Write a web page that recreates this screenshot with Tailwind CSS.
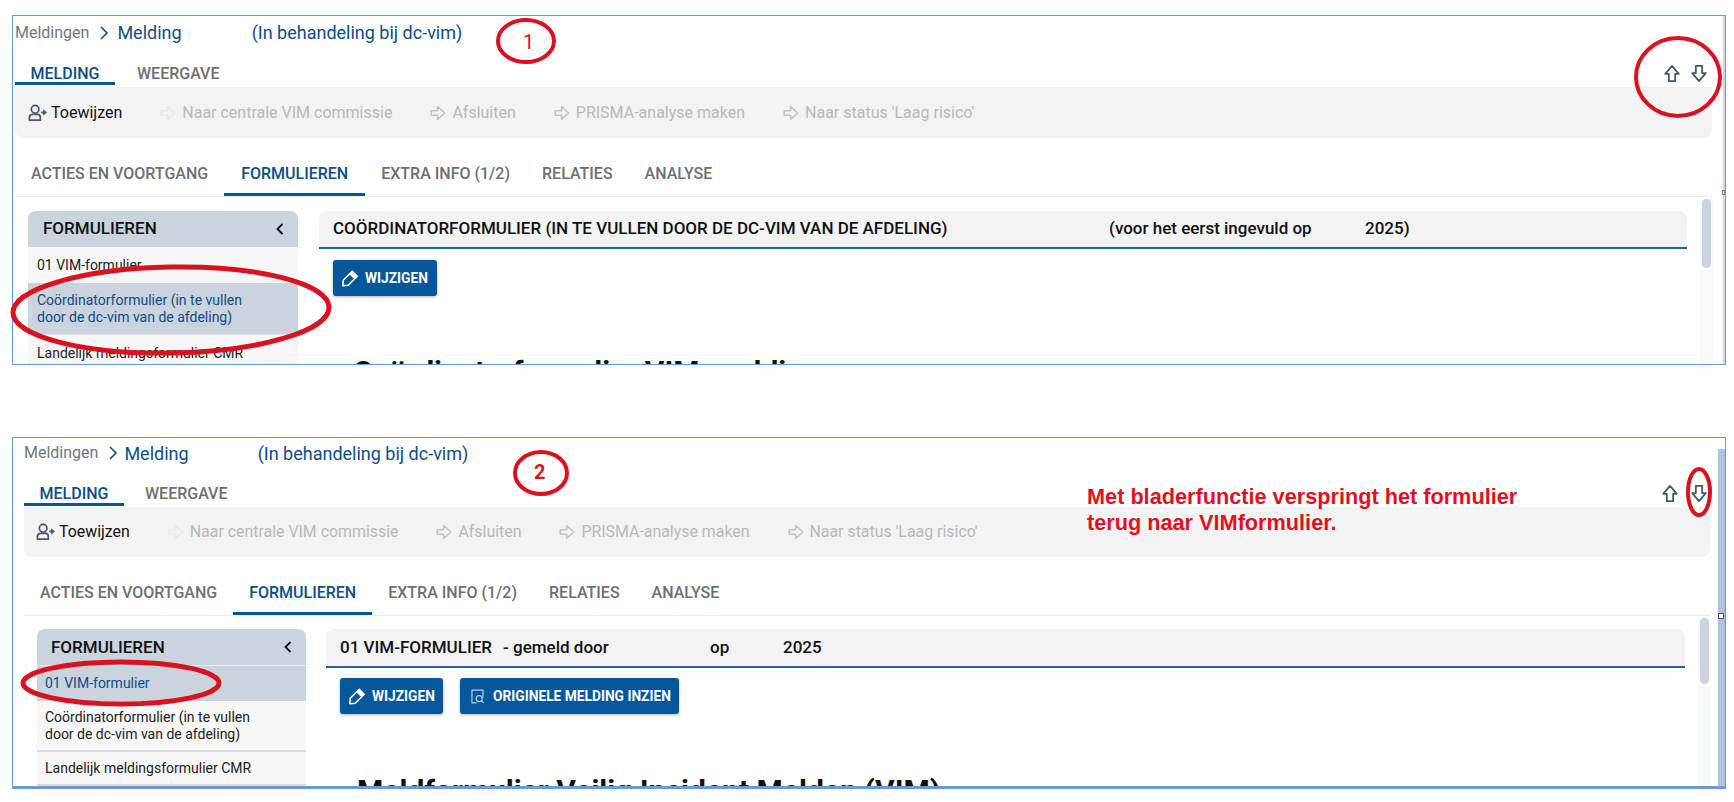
<!DOCTYPE html>
<html lang="nl">
  <head>
    <meta charset="UTF-8" />
    <meta name="viewport" content="width=device-width, initial-scale=1.0" />
    <title>Melding bladerfunctie</title>
    <script src="https://cdn.jsdelivr.net/npm/@tailwindcss/browser@4"></script>
  </head>
  <body class="bg-white font-['Roboto',sans-serif]">
    <svg class="hidden">
      <symbol id="arrow-right" viewBox="0 0 20 20">
        <path d="M2.5 7.5h7V3l8 7-8 7v-4.5h-7z" fill="none" stroke="currentColor" stroke-width="1.8" stroke-linejoin="round" />
      </symbol>
      <symbol id="arrow-up" viewBox="0 0 20 20">
        <path d="M10 1.500l7.500 9h-4v8h-7v-8h-4z" fill="none" stroke="currentColor" stroke-width="2" stroke-linejoin="round" />
      </symbol>
      <symbol id="arrow-down" viewBox="0 0 20 20">
        <path d="M10 18.500l7.500-9h-4v-8h-7v8h-4z" fill="none" stroke="currentColor" stroke-width="2" stroke-linejoin="round" />
      </symbol>
      <symbol id="assign" viewBox="0 0 20 20">
        <circle cx="7.500" cy="6" r="4" fill="none" stroke="currentColor" stroke-width="1.8" />
        <path d="M1.500 17.500v-2.500c0-2 1.500-3.500 3.500-3.500h5c2 0 3 1.500 3 3.500v2.500z" fill="none" stroke="currentColor" stroke-width="1.8" stroke-linejoin="round" />
        <path d="M14 8.500h2V6l4 3.500-4 3.500v-2.500h-2z" fill="currentColor" />
      </symbol>
      <symbol id="pencil" viewBox="0 0 20 20">
        <path d="M12.500 2.500L18 8 8 18l-6 .5.500-6z" fill="none" stroke="currentColor" stroke-width="1.8" stroke-linejoin="round" />
        <path d="M12.500 2.500L18 8l-3 3-5.500-5.500z" fill="currentColor" stroke="currentColor" stroke-linejoin="round" />
      </symbol>
      <symbol id="inspect" viewBox="0 0 20 20">
        <path d="M9 17.500H3.500v-15h13v9" fill="none" stroke="currentColor" stroke-width="1.4" />
        <circle cx="12" cy="12.500" r="3.500" fill="none" stroke="currentColor" stroke-width="1.4" />
        <path d="M14.500 15l3 2.500" fill="none" stroke="currentColor" stroke-width="1.4" />
      </symbol>
    </svg>

    <div class="relative h-[802px] w-full overflow-hidden">
      <!-- Schermafdruk 1 -->
      <section class="relative ml-[12px] mt-[15px] flex h-[350px] w-[1714px] flex-col overflow-hidden border border-[#6d9bc7] bg-white">
        <div class="absolute right-0 top-0 h-full w-[2px] bg-[#c9d8ea]"></div>
        <div class="absolute right-0 top-[174px] h-[5px] w-[3px] border border-[#777] bg-white"></div>
        <div class="flex h-[33px] shrink-0 items-center pl-[2px] text-[18px] text-[#0f4d85]">
          <span class="text-[16px] text-[#72777b]">Meldingen</span>
          <svg class="ml-[9px] h-[14px] w-[12px]" viewBox="0 0 12 14"><path d="M3 1l6 6-6 6" fill="none" stroke="#0f4d85" stroke-width="1.6" /></svg>
          <span class="ml-[7px]">Melding</span>
          <span class="ml-[70px]">(In behandeling bij dc-vim)</span>
        </div>
        <div class="flex h-[38px] shrink-0 pl-[2px] text-[16px] font-medium uppercase">
          <div class="flex h-[36px] w-[100px] items-center justify-center border-b-[3px] border-[#0a5596] pt-[17px] text-[#0f4d85]">Melding</div>
          <div class="flex h-[36px] items-center pb-[3px] pl-[22px] pt-[17px] text-[#6f6f6f]">Weergave</div>
          <div class="ml-auto flex gap-[9px] pr-[17px] pt-[15px] text-[#47586a]">
            <svg class="h-[19px] w-[18px]"><use href="#arrow-up" /></svg>
            <svg class="h-[19px] w-[18px]"><use href="#arrow-down" /></svg>
          </div>
        </div>
        <div class="ml-[2px] flex h-[51px] w-[1697px] shrink-0 items-center gap-[37px] rounded-b-lg bg-[#f3f3f3] pl-[13px] text-[16px] text-[#b9b9b9]">
          <div class="flex items-center gap-[4px] text-[#111]"><svg class="h-[20px] w-[19px] text-[#47586a]"><use href="#assign" /></svg>Toewijzen</div>
          <div class="flex items-center gap-[5px]"><svg class="h-[18px] w-[18px] text-[#e9e9e9]"><use href="#arrow-right" /></svg>Naar centrale VIM commissie</div>
          <div class="flex items-center gap-[5px]"><svg class="h-[18px] w-[18px] text-[#c4c4c4]"><use href="#arrow-right" /></svg>Afsluiten</div>
          <div class="flex items-center gap-[5px]"><svg class="h-[18px] w-[18px] text-[#c4c4c4]"><use href="#arrow-right" /></svg>PRISMA-analyse maken</div>
          <div class="flex items-center gap-[5px]"><svg class="h-[18px] w-[18px] text-[#c4c4c4]"><use href="#arrow-right" /></svg>Naar status 'Laag risico'</div>
        </div>
        <div class="ml-[2px] flex h-[59px] w-[1697px] shrink-0 items-end border-b border-[#ececec] text-[16px] font-medium uppercase text-[#6f6f6f]">
          <div class="flex h-[38px] items-center px-[16px] pb-[7px]">Acties en voortgang</div>
          <div class="flex h-[38px] items-center border-b-[3px] border-[#0a5596] px-[17px] pb-[4px] text-[#0f4d85]">Formulieren</div>
          <div class="flex h-[38px] items-center px-[16px] pb-[7px]">Extra info (1/2)</div>
          <div class="flex h-[38px] items-center px-[16px] pb-[7px]">Relaties</div>
          <div class="flex h-[38px] items-center px-[16px] pb-[7px]">Analyse</div>
        </div>
        <div class="flex min-h-0 flex-1 overflow-hidden pl-[15px]">
          <aside class="mt-[14px] w-[270px] shrink-0 text-[14px] leading-[17px] text-[#222]">
            <div class="flex h-[36px] items-center justify-between rounded-t-lg bg-[#cbd3de] pb-[1px] pl-[15px] pr-[13px] text-[17px] font-medium uppercase text-[#111]">
              Formulieren
              <svg class="h-[14px] w-[10px]" viewBox="0 0 10 14"><path d="M7.500 2L2.500 7l5 5" fill="none" stroke="#111" stroke-width="1.8" /></svg>
            </div>
            <div class="flex h-[36px] items-center bg-[#f7f7f7] pl-[9px]">01 VIM-formulier</div>
            <div class="flex h-[52px] items-center border-b border-[#dfe3e8] bg-[#cbd3de] pl-[9px] text-[#0f4d85]">Coördinatorformulier (in te vullen<br />door de dc-vim van de afdeling)</div>
            <div class="flex h-[36px] items-center bg-[#f7f7f7] pl-[9px]">Landelijk meldingsformulier CMR</div>
          </aside>
          <main class="ml-[21px] mt-[14px] w-[1368px] shrink-0">
            <div class="flex h-[38px] items-center rounded-t-lg border-b-2 border-[#1f639f] bg-[#f3f3f3] pl-[14px] text-[17px] font-medium text-[#111]">
              <span class="w-[776px] shrink-0">COÖRDINATORFORMULIER (IN TE VULLEN DOOR DE DC-VIM VAN DE AFDELING)</span>
              <span class="w-[256px] shrink-0">(voor het eerst ingevuld op</span>
              <span>2025)</span>
            </div>
            <div class="mt-[11px] flex pl-[14px]">
              <div class="flex h-[36px] w-[104px] items-center gap-[6px] rounded-[3px] bg-[#06569c] pl-[8px] text-[13.750px] font-bold text-white shadow-[0_1px_3px_rgba(0,0,0,0.3)]">
                <svg class="h-[18px] w-[18px]"><use href="#pencil" /></svg>WIJZIGEN
              </div>
            </div>
            <h1 class="ml-[34px] mt-[62px] whitespace-nowrap text-[30px] font-bold leading-[28px] text-[#111]">Coördinatorformulier VIM-melding</h1>
          </main>
          <div class="ml-[13px] mt-[2px] w-[13px] shrink-0 bg-[#f8f9fb] px-[2px]">
            <div class="h-[69px] rounded-full bg-[#cbd3de]"></div>
          </div>
        </div>
      </section>

      <!-- Schermafdruk 2 -->
      <section class="relative ml-[12px] mt-[72px] flex h-[352px] w-[1714px] flex-col overflow-hidden border border-b-[3px] border-[#6d9bc7] bg-white">
        <div class="absolute bottom-0 right-0 top-[11px] w-[7px] bg-[#b0c2dc]"></div>
        <div class="absolute right-[1px] top-[175px] h-[6px] w-[6px] border border-[#555] bg-white"></div>
        <div class="flex h-[30px] shrink-0 items-center pl-[11px] text-[18px] text-[#0f4d85]">
          <span class="text-[16px] text-[#72777b]">Meldingen</span>
          <svg class="ml-[9px] h-[14px] w-[12px]" viewBox="0 0 12 14"><path d="M3 1l6 6-6 6" fill="none" stroke="#0f4d85" stroke-width="1.6" /></svg>
          <span class="ml-[5px]">Melding</span>
          <span class="ml-[69px]">(In behandeling bij dc-vim)</span>
        </div>
        <div class="flex h-[39px] shrink-0 pl-[11px] text-[16px] font-medium uppercase">
          <div class="flex h-[38px] w-[100px] items-center justify-center border-b-[3px] border-[#0a5596] pt-[17px] text-[#0f4d85]">Melding</div>
          <div class="flex h-[38px] items-center pb-[3px] pl-[21px] pt-[17px] text-[#6f6f6f]">Weergave</div>
          <div class="ml-auto flex gap-[11px] pr-[17px] pt-[16px] text-[#47586a]">
            <svg class="h-[19px] w-[18px]"><use href="#arrow-up" /></svg>
            <svg class="h-[19px] w-[18px]"><use href="#arrow-down" /></svg>
          </div>
        </div>
        <div class="ml-[11px] flex h-[50px] w-[1686px] shrink-0 items-center gap-[37px] rounded-b-lg bg-[#f3f3f3] pl-[12px] text-[15.900px] text-[#b9b9b9]">
          <div class="flex items-center gap-[4px] text-[#111]"><svg class="h-[20px] w-[19px] text-[#47586a]"><use href="#assign" /></svg>Toewijzen</div>
          <div class="flex items-center gap-[5px]"><svg class="h-[18px] w-[18px] text-[#e9e9e9]"><use href="#arrow-right" /></svg>Naar centrale VIM commissie</div>
          <div class="flex items-center gap-[5px]"><svg class="h-[18px] w-[18px] text-[#c4c4c4]"><use href="#arrow-right" /></svg>Afsluiten</div>
          <div class="flex items-center gap-[5px]"><svg class="h-[18px] w-[18px] text-[#c4c4c4]"><use href="#arrow-right" /></svg>PRISMA-analyse maken</div>
          <div class="flex items-center gap-[5px]"><svg class="h-[18px] w-[18px] text-[#c4c4c4]"><use href="#arrow-right" /></svg>Naar status 'Laag risico'</div>
        </div>
        <div class="ml-[11px] flex h-[59px] w-[1686px] shrink-0 items-end border-b border-[#ececec] text-[16px] font-medium uppercase text-[#6f6f6f]">
          <div class="flex h-[38px] items-center px-[16px] pb-[7px]">Acties en voortgang</div>
          <div class="flex h-[38px] items-center border-b-[3px] border-[#0a5596] px-[16px] pb-[4px] text-[#0f4d85]">Formulieren</div>
          <div class="flex h-[38px] items-center px-[16px] pb-[7px]">Extra info (1/2)</div>
          <div class="flex h-[38px] items-center px-[16px] pb-[7px]">Relaties</div>
          <div class="flex h-[38px] items-center px-[16px] pb-[7px]">Analyse</div>
        </div>
        <div class="flex min-h-0 flex-1 overflow-hidden pl-[24px]">
          <aside class="mt-[13px] w-[269px] shrink-0 text-[14px] leading-[17px] text-[#222]">
            <div class="flex h-[37px] items-center justify-between rounded-t-lg border-b border-[#e8ebef] bg-[#cbd3de] pl-[14px] pr-[13px] text-[17px] font-medium uppercase text-[#111]">
              Formulieren
              <svg class="h-[14px] w-[10px]" viewBox="0 0 10 14"><path d="M7.500 2L2.500 7l5 5" fill="none" stroke="#111" stroke-width="1.8" /></svg>
            </div>
            <div class="flex h-[35px] items-center bg-[#cbd3de] pl-[8px] text-[#0f4d85]">01 VIM-formulier</div>
            <div class="flex h-[51px] items-center border-b-2 border-[#d9dde2] bg-[#f7f7f7] pl-[8px]">Coördinatorformulier (in te vullen<br />door de dc-vim van de afdeling)</div>
            <div class="flex h-[34px] items-center border-b-2 border-[#d9dde2] bg-[#f7f7f7] pl-[8px]">Landelijk meldingsformulier CMR</div>
          </aside>
          <main class="ml-[20px] mt-[13px] w-[1359px] shrink-0">
            <div class="flex h-[39px] items-center rounded-t-lg border-b-2 border-[#1f639f] bg-[#f3f3f3] pl-[14px] text-[17px] font-medium text-[#111]">
              <span class="w-[163px] shrink-0">01 VIM-FORMULIER</span>
              <span class="w-[207px] shrink-0">- gemeld door</span>
              <span class="w-[73px] shrink-0">op</span>
              <span>2025</span>
            </div>
            <div class="mt-[10px] flex gap-[17px] pl-[14px]">
              <div class="flex h-[36px] w-[103px] items-center gap-[6px] rounded-[3px] bg-[#06569c] pl-[8px] text-[13.750px] font-bold text-white shadow-[0_1px_3px_rgba(0,0,0,0.3)]">
                <svg class="h-[18px] w-[18px]"><use href="#pencil" /></svg>WIJZIGEN
              </div>
              <div class="flex h-[36px] w-[219px] items-center gap-[7px] rounded-[3px] bg-[#06569c] pl-[9px] text-[13.750px] font-bold text-white shadow-[0_1px_3px_rgba(0,0,0,0.3)]">
                <svg class="h-[17px] w-[17px] text-[#b9cfe4]"><use href="#inspect" /></svg>ORIGINELE MELDING INZIEN
              </div>
            </div>
            <h1 class="ml-[31px] mt-[63px] whitespace-nowrap text-[30px] font-bold leading-[28px] text-[#111]">Meldformulier Veilig Incident Melden (VIM)</h1>
          </main>
          <div class="ml-[13px] mt-[2px] w-[13px] shrink-0 bg-[#f8f9fb] px-[2px]">
            <div class="h-[66px] rounded-full bg-[#cbd3de]"></div>
          </div>
        </div>
      </section>

      <!-- Aantekeningen over de schermafdrukken -->
      <svg class="pointer-events-none absolute inset-0 h-[802px] w-[1734px]" viewBox="0 0 1734 802" fill="none" stroke="#d9121f" stroke-width="4">
        <ellipse cx="526" cy="41" rx="28" ry="21" />
        <ellipse cx="1678" cy="77" rx="42" ry="39" />
        <ellipse cx="171" cy="310" rx="158" ry="43" stroke-width="5" transform="rotate(-1 171 310)" />
        <ellipse cx="541" cy="473" rx="26" ry="21" />
        <ellipse cx="1699" cy="492" rx="11" ry="23" />
        <ellipse cx="121" cy="683" rx="98" ry="21" stroke-width="5" />
      </svg>
      <span class="absolute left-[523px] top-[29px] text-[20px] leading-[26px] text-[#d9121f]">1</span>
      <span class="absolute left-[534px] top-[459px] text-[20px] font-bold leading-[26px] text-[#d9121f]">2</span>
      <p class="absolute left-[1087px] top-[484px] font-['Liberation_Sans',sans-serif] text-[21.700px] font-bold leading-[26px] text-[#e2101f]">Met bladerfunctie verspringt het formulier<br />terug naar VIMformulier.</p>
    </div>
  </body>
</html>
